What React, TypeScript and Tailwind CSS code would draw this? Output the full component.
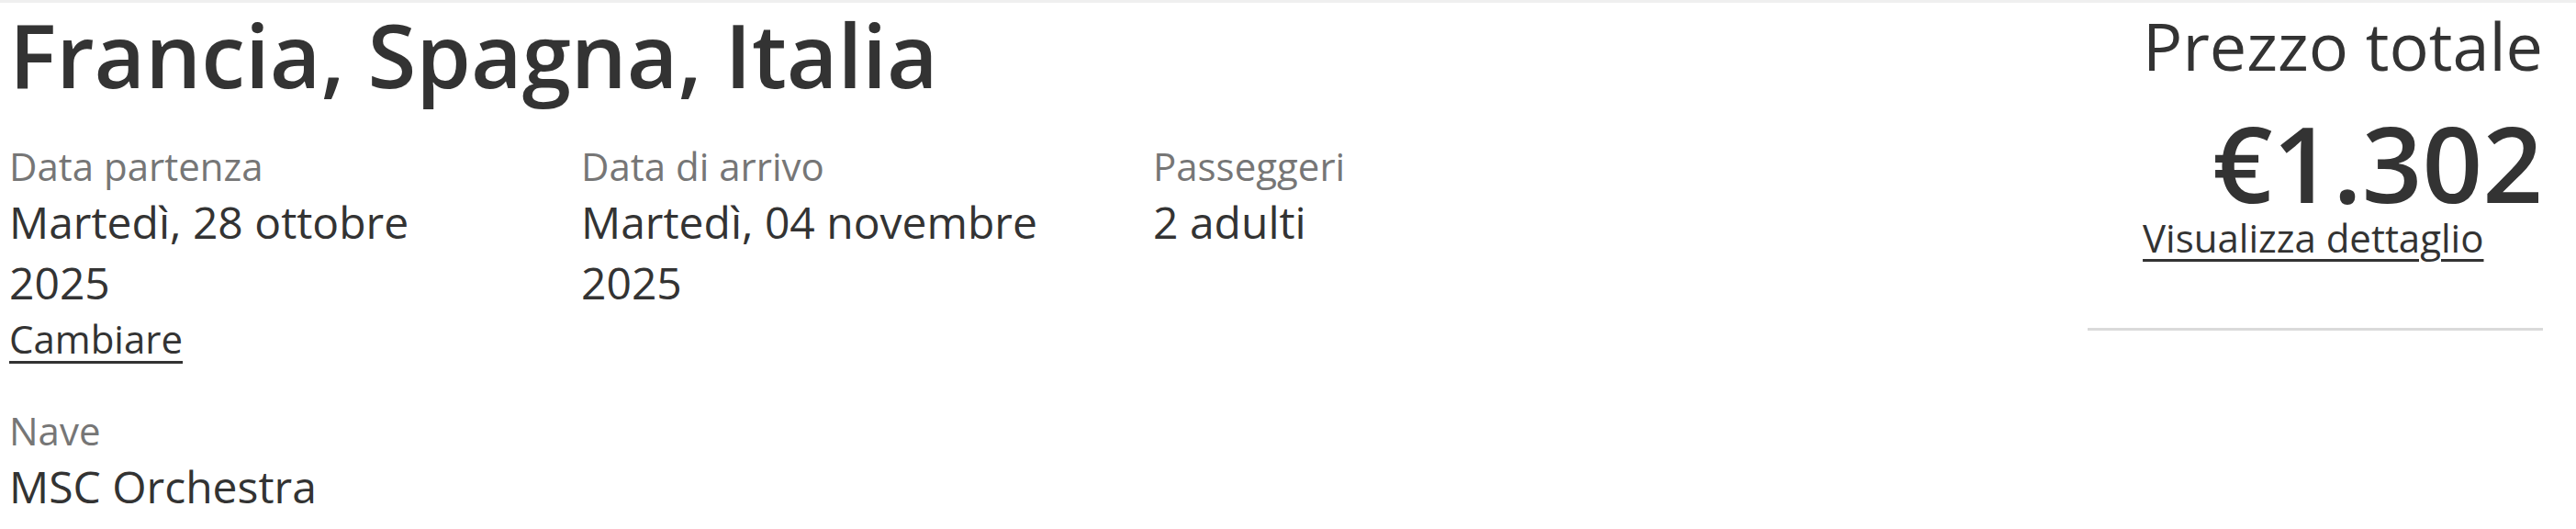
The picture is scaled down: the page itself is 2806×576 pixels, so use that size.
const font = { fontFamily: '"Open Sans", "Noto Sans", sans-serif' };

const Field = ({ label, children }: { label: string; children: React.ReactNode }) => (
	<div className="flex flex-col">
		<span className="text-[42px] leading-[56px] text-[#767676]">{label}</span>
		<div className="text-[48px] leading-[66px] text-[#333333]">{children}</div>
	</div>
);

const App = () => {
	return (
		<div className="w-[2806px] h-[576px] bg-white overflow-hidden" style={font}>
			<div className="h-[3px] bg-[#efefef]" />
			<div className="flex justify-between pl-[10px] pr-[36px] pt-[3px]">
				<div className="flex flex-col">
					<h1 className="text-[96px] leading-[106px] font-semibold text-[#333333]">
						Francia, Spagna, Italia
					</h1>
					<div className="flex mt-[41px]">
						<div className="w-[623px] pr-[90px] flex flex-col">
							<Field label="Data partenza">Martedì, 28 ottobre 2025</Field>
							<a
								href="#"
								className="text-[42px] leading-[56px] text-[#333333] underline underline-offset-[8px] decoration-[length:3px]"
							>
								Cambiare
							</a>
						</div>
						<div className="w-[623px] pr-[90px]">
							<Field label="Data di arrivo">Martedì, 04 novembre 2025</Field>
						</div>
						<div className="w-[623px] pr-[90px]">
							<Field label="Passeggeri">2 adulti</Field>
						</div>
					</div>
					<div className="mt-[44px]">
						<Field label="Nave">MSC Orchestra</Field>
					</div>
				</div>
				<div className="w-[496px] flex flex-col items-end">
					<div className="flex flex-col items-end">
						<h2 className="text-[72px] leading-[86px] text-[#333333]">Prezzo totale</h2>
						<div className="mt-[31px] text-[115px] leading-[108px] font-semibold text-[#333333]">
							€1.302
						</div>
						<a
							href="#"
							className="self-start text-[42px] leading-[56px] text-[#333333] underline underline-offset-[7px] decoration-[length:3px]"
						>
							Visualizza dettaglio
						</a>
					</div>
					<div className="w-full h-[3px] bg-[#dadada] mt-[70px]" />
				</div>
			</div>
		</div>
	);
};

export default App;
